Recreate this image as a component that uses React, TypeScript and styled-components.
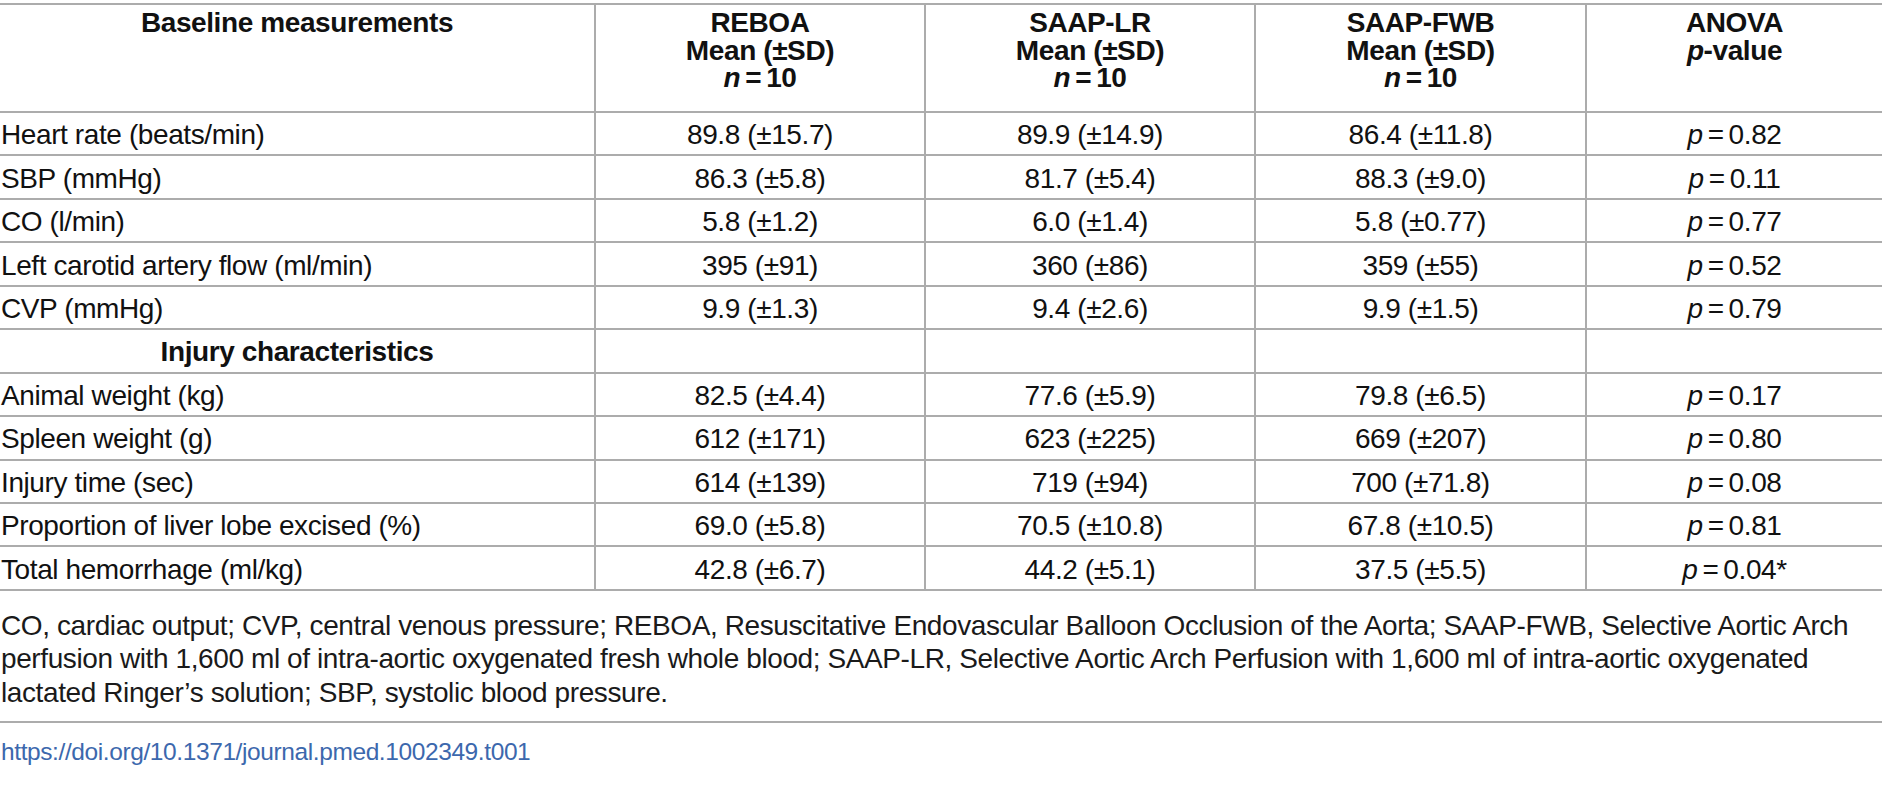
import React from 'react'
import styled, { createGlobalStyle } from 'styled-components'

const GlobalStyle = createGlobalStyle`
	html,
	body {
		margin: 0;
		padding: 0;
		background: #ffffff;
	}
	body {
		font-family: 'Liberation Sans', Arial, Helvetica, sans-serif;
		color: #111111;
	}
`

const LINE = '#acacac'

type DataRow = {
	label: string
	reboa: string
	lr: string
	fwb: string
	p: string
}

const baseline: DataRow[] = [
	{ label: 'Heart rate (beats/min)', reboa: '89.8 (±15.7)', lr: '89.9 (±14.9)', fwb: '86.4 (±11.8)', p: '0.82' },
	{ label: 'SBP (mmHg)', reboa: '86.3 (±5.8)', lr: '81.7 (±5.4)', fwb: '88.3 (±9.0)', p: '0.11' },
	{ label: 'CO (l/min)', reboa: '5.8 (±1.2)', lr: '6.0 (±1.4)', fwb: '5.8 (±0.77)', p: '0.77' },
	{ label: 'Left carotid artery flow (ml/min)', reboa: '395 (±91)', lr: '360 (±86)', fwb: '359 (±55)', p: '0.52' },
	{ label: 'CVP (mmHg)', reboa: '9.9 (±1.3)', lr: '9.4 (±2.6)', fwb: '9.9 (±1.5)', p: '0.79' },
]

const injury: DataRow[] = [
	{ label: 'Animal weight (kg)', reboa: '82.5 (±4.4)', lr: '77.6 (±5.9)', fwb: '79.8 (±6.5)', p: '0.17' },
	{ label: 'Spleen weight (g)', reboa: '612 (±171)', lr: '623 (±225)', fwb: '669 (±207)', p: '0.80' },
	{ label: 'Injury time (sec)', reboa: '614 (±139)', lr: '719 (±94)', fwb: '700 (±71.8)', p: '0.08' },
	{ label: 'Proportion of liver lobe excised (%)', reboa: '69.0 (±5.8)', lr: '70.5 (±10.8)', fwb: '67.8 (±10.5)', p: '0.81' },
	{ label: 'Total hemorrhage (ml/kg)', reboa: '42.8 (±6.7)', lr: '44.2 (±5.1)', fwb: '37.5 (±5.5)', p: '0.04*' },
]

const Eq = () => <EqSign>=</EqSign>

const PValue = ({ value }: { value: string }) => (
	<span>
		<Ital>p</Ital>
		<Eq />
		{value}
	</span>
)

const GroupHead = ({ name }: { name: string }) => (
	<HeadCell>
		<span>{name}</span>
		<span>Mean (±SD)</span>
		<span>
			<Ital>n</Ital>
			<Eq />
			10
		</span>
	</HeadCell>
)

const Row = ({ row }: { row: DataRow }) => (
	<BodyRow>
		<BodyCell $left>{row.label}</BodyCell>
		<BodyCell>{row.reboa}</BodyCell>
		<BodyCell>{row.lr}</BodyCell>
		<BodyCell>{row.fwb}</BodyCell>
		<BodyCell>
			<PValue value={row.p} />
		</BodyCell>
	</BodyRow>
)

const App = () => {
	return (
		<Page>
			<GlobalStyle />
			<Table>
				<HeadRow>
					<HeadCell>
						<span>Baseline measurements</span>
					</HeadCell>
					<GroupHead name="REBOA" />
					<GroupHead name="SAAP-LR" />
					<GroupHead name="SAAP-FWB" />
					<HeadCell>
						<span>ANOVA</span>
						<span>
							<Ital>p</Ital>-value
						</span>
					</HeadCell>
				</HeadRow>

				{baseline.map((row) => (
					<Row key={row.label} row={row} />
				))}

				<BodyRow>
					<BodyCell $section>Injury characteristics</BodyCell>
					<BodyCell />
					<BodyCell />
					<BodyCell />
					<BodyCell />
				</BodyRow>

				{injury.map((row) => (
					<Row key={row.label} row={row} />
				))}
			</Table>

			<Caption>
				CO, cardiac output; CVP, central venous pressure; REBOA, Resuscitative
				Endovascular Balloon Occlusion of the Aorta; SAAP-FWB, Selective Aortic
				Arch perfusion with 1,600 ml of intra-aortic oxygenated fresh whole
				blood; SAAP-LR, Selective Aortic Arch Perfusion with 1,600 ml of
				intra-aortic oxygenated lactated Ringer’s solution; SBP, systolic blood
				pressure.
			</Caption>

			<Footer>
				<DoiLink href="#">https://doi.org/10.1371/journal.pmed.1002349.t001</DoiLink>
			</Footer>
		</Page>
	)
}

export default App

const Page = styled.div`
	width: 1882px;
	padding-top: 3px;
	font-size: 28px;
	letter-spacing: -0.4px;
`

const Table = styled.div`
	border-top: 2px solid ${LINE};
`

const gridCols = `
	display: grid;
	grid-template-columns: 594px 330px 330px 331px 1fr;
	box-sizing: border-box;
	border-bottom: 2px solid ${LINE};
`

const HeadRow = styled.div`
	${gridCols}
	height: 108px;
`

const BodyRow = styled.div`
	${gridCols}
	height: 43.45px;
`

const HeadCell = styled.div`
	display: flex;
	flex-direction: column;
	align-items: center;
	padding-top: 4px;
	line-height: 27.5px;
	font-weight: 700;
	text-align: center;

	& + & {
		border-left: 2px solid ${LINE};
	}
`

const BodyCell = styled.div<{ $left?: boolean; $section?: boolean }>`
	display: flex;
	align-items: center;
	justify-content: ${(p) => (p.$left ? 'flex-start' : 'center')};
	padding: 3px 0 0 ${(p) => (p.$left ? '1px' : '0')};
	box-sizing: border-box;
	white-space: nowrap;
	font-weight: ${(p) => (p.$section ? 700 : 400)};

	& + & {
		border-left: 2px solid ${LINE};
	}
`

const Ital = styled.i`
	font-style: italic;
`

const EqSign = styled.span`
	margin: 0 5px;
`

const Caption = styled.p`
	margin: 18px 0 0;
	padding: 0 0 12px 1px;
	line-height: 33.5px;
	color: #1a1a1a;
	border-bottom: 2px solid ${LINE};
`

const Footer = styled.div`
	padding: 15px 0 0 1px;
	font-size: 24.5px;
`

const DoiLink = styled.a`
	color: #3c68ad;
	text-decoration: none;
`
